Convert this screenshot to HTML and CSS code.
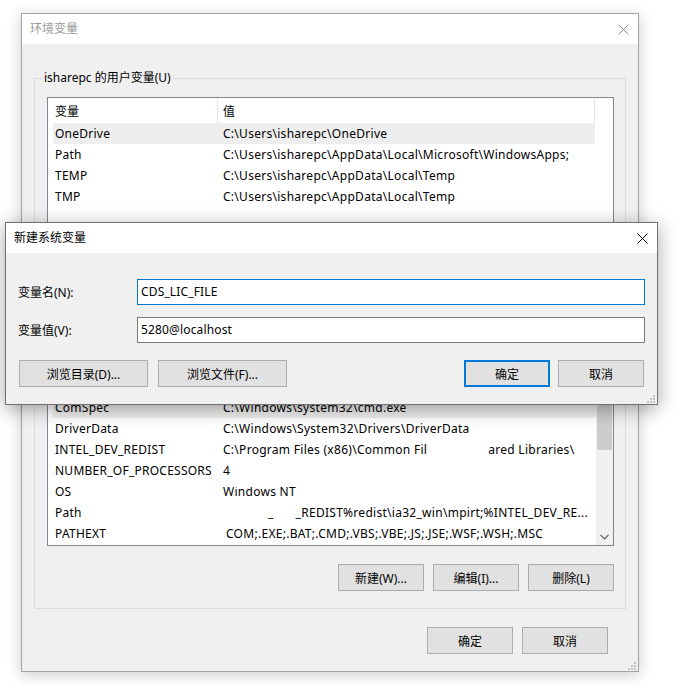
FILE: index.html
```html
<!DOCTYPE html>
<html lang="zh-CN">
<head>
<meta charset="utf-8">
<title>环境变量</title>
<link rel="stylesheet" href="styles.css">
</head>
<body>
<div class="desk">
  <div class="win main">
    <div class="titlebar">
      <span class="title dim">环境变量</span>
      <svg class="close dimx" width="11" height="11" viewBox="0 0 11 11"><path d="M0.5 0.5 L10.5 10.5 M10.5 0.5 L0.5 10.5" /></svg>
    </div>
    <div class="winbody">
      <div class="group">
        <span class="group-label">isharepc 的用户变量(U)</span>
        <div class="list user-list">
          <div class="lhead"><div class="hc hc1">变量</div><div class="hc hc2">值</div></div>
          <div class="row sel"><span class="c1">OneDrive</span><span class="c2">C:\Users\isharepc\OneDrive</span></div>
          <div class="row"><span class="c1">Path</span><span class="c2">C:\Users\isharepc\AppData\Local\Microsoft\WindowsApps;</span></div>
          <div class="row"><span class="c1">TEMP</span><span class="c2">C:\Users\isharepc\AppData\Local\Temp</span></div>
          <div class="row"><span class="c1">TMP</span><span class="c2">C:\Users\isharepc\AppData\Local\Temp</span></div>
        </div>
        <div class="list sys-list">
          <div class="rows">
            <div class="row sel"><span class="c1">ComSpec</span><span class="c2">C:\Windows\system32\cmd.exe</span></div>
            <div class="row"><span class="c1">DriverData</span><span class="c2">C:\Windows\System32\Drivers\DriverData</span></div>
            <div class="row"><span class="c1">INTEL_DEV_REDIST</span><span class="c2">C:\Program Files (x86)\Common Fil<span class="gap-a">ared Libraries\</span></span></div>
            <div class="row"><span class="c1">NUMBER_OF_PROCESSORS</span><span class="c2">4</span></div>
            <div class="row"><span class="c1">OS</span><span class="c2"><span class="clipped">Windows NT</span></span></div>
            <div class="row"><span class="c1">Path</span><span class="c2"><span class="gap-b">_</span><span class="gap-c">_REDIST%redist\ia32_win\mpirt;%INTEL_DEV_RE...</span></span></div>
            <div class="row"><span class="c1">PATHEXT</span><span class="c2 ext">COM;.EXE;.BAT;.CMD;.VBS;.VBE;.JS;.JSE;.WSF;.WSH;.MSC</span></div>
          </div>
          <div class="vscroll">
            <div class="thumb"></div>
            <div class="arrow">
              <svg width="9" height="6" viewBox="0 0 9 6"><path d="M0.5 0.8 L4.5 4.8 L8.5 0.8" /></svg>
            </div>
          </div>
        </div>
        <div class="btnrow">
          <button class="btn">新建(W)...</button>
          <button class="btn">编辑(I)...</button>
          <button class="btn">删除(L)</button>
        </div>
      </div>
      <div class="footer">
        <button class="btn">确定</button>
        <button class="btn">取消</button>
      </div>
    </div>
    <svg class="grip" width="8" height="8" viewBox="0 0 8 8"><rect x="6" y="0" width="2" height="2"/><rect x="3" y="3" width="2" height="2"/><rect x="6" y="3" width="2" height="2"/><rect x="0" y="6" width="2" height="2"/><rect x="3" y="6" width="2" height="2"/><rect x="6" y="6" width="2" height="2"/></svg>
  </div>

  <div class="win dialog">
    <div class="titlebar">
      <span class="title">新建系统变量</span>
      <svg class="close" width="11" height="11" viewBox="0 0 11 11"><path d="M0.5 0.5 L10.5 10.5 M10.5 0.5 L0.5 10.5" /></svg>
    </div>
    <div class="dlgbody">
      <div class="field">
        <label class="flabel">变量名(N):</label>
        <div class="input focus">CDS_LIC_FILE</div>
      </div>
      <div class="field">
        <label class="flabel">变量值(V):</label>
        <div class="input">5280@localhost</div>
      </div>
      <div class="dlgbtns">
        <button class="btn wide">浏览目录(D)...</button>
        <button class="btn wide">浏览文件(F)...</button>
        <span class="spacer"></span>
        <button class="btn default">确定</button>
        <button class="btn">取消</button>
      </div>
    </div>
    <svg class="grip" width="8" height="8" viewBox="0 0 8 8"><rect x="6" y="0" width="2" height="2"/><rect x="3" y="3" width="2" height="2"/><rect x="6" y="3" width="2" height="2"/><rect x="0" y="6" width="2" height="2"/><rect x="3" y="6" width="2" height="2"/><rect x="6" y="6" width="2" height="2"/></svg>
  </div>
</div>
</body>
</html>
```

FILE: styles.css
```css
* { box-sizing: border-box; }

html, body {
  margin: 0;
  padding: 0;
  background: #ffffff;
}

body {
  width: 676px;
  height: 686px;
  overflow: hidden;
  font-family: "Noto Sans", "Noto Sans CJK SC", sans-serif;
  font-size: 12px;
  color: #000;
}

.desk {
  position: relative;
  width: 676px;
  height: 686px;
  padding: 13px 0 0 21px;
}

.win {
  background: #f0f0f0;
  display: flex;
  flex-direction: column;
  position: relative;
}

.main {
  width: 618px;
  height: 659px;
  border: 1px solid #a3a3a3;
  box-shadow: 0 3px 14px rgba(0, 0, 0, 0.2);
}

.titlebar {
  height: 30px;
  flex: none;
  background: #fff;
  display: flex;
  align-items: center;
  justify-content: space-between;
  padding: 0 9px 0 8px;
}

.title { line-height: 1; }
.dim { color: #9a9a9a; }

.close path {
  stroke: #000;
  stroke-width: 1;
  fill: none;
}
.dimx path { stroke: #8c8c8c; }

.winbody {
  flex: 1;
  display: flex;
  flex-direction: column;
  padding: 34px 12px 0 12px;
}

.group {
  position: relative;
  height: 531px;
  border: 1px solid #dcdcdc;
  display: flex;
  flex-direction: column;
  padding: 18px 11px 17px 12px;
}

.group-label {
  position: absolute;
  left: 7px;
  top: -9px;
  padding: 0 2px;
  background: #f0f0f0;
  line-height: 16px;
}

.list {
  width: 567px;
  background: #fff;
  border: 1px solid #828790;
  flex: none;
}

.user-list {
  height: 150px;
}

.lhead {
  height: 25px;
  display: flex;
}

.hc {
  display: flex;
  align-items: center;
  border-right: 1px solid #e5e5e5;
}
.hc1 { width: 170px; padding-left: 7px; }
.hc2 { width: 377px; padding-left: 5px; }

.row {
  height: 21px;
  width: 542px;
  margin-left: 5px;
  display: flex;
  align-items: center;
  white-space: nowrap;
  flex: none;
  letter-spacing: 0.25px;
}

.row.sel { background: #eeeeee; }

.c1 {
  width: 170px;
  flex: none;
  padding-left: 2px;
  overflow: hidden;
}

.c2 {
  flex: 1;
  overflow: hidden;
  white-space: nowrap;
  letter-spacing: 0.28px;
}

.sys-list {
  margin-top: 20px;
  flex: 1;
  display: flex;
}

.rows {
  flex: 1;
  display: flex;
  flex-direction: column;
  justify-content: flex-end;
  overflow: hidden;
  padding-bottom: 1px;
}

.sys-list .row { width: 543px; }

.gap-a { margin-left: 61px; }
.gap-b { margin-left: 45px; }
.gap-c { margin-left: 22px; }
.ext { padding-left: 3px; }
.clipped {
  display: inline-block;
  clip-path: inset(4px 0 0 0);
}

.vscroll {
  width: 17px;
  flex: none;
  background: #f0f0f0;
  display: flex;
  flex-direction: column;
  padding-top: 17px;
}

.thumb {
  height: 165px;
  margin: 0 1px;
  background: #cdcdcd;
}

.arrow {
  margin-top: auto;
  height: 17px;
  display: flex;
  align-items: center;
  justify-content: center;
}
.arrow path {
  fill: none;
  stroke: #606060;
  stroke-width: 1.2;
}

.btnrow {
  margin-top: 18px;
  display: flex;
  justify-content: flex-end;
  gap: 9px;
}

.btn {
  width: 86px;
  height: 27px;
  background: #e1e1e1;
  border: 1px solid #adadad;
  font-family: inherit;
  font-size: 12px;
  color: #000;
  padding: 0;
  margin: 0;
  display: flex;
  align-items: center;
  justify-content: center;
}

.btn.wide { width: 129px; }
.btn.default { border: 2px solid #0078d7; }

.footer {
  margin-top: 18px;
  display: flex;
  justify-content: flex-end;
  gap: 9px;
  padding-right: 18px;
}

.grip {
  position: absolute;
  right: 2px;
  bottom: 1px;
}
.grip rect { fill: #c2c2c2; }

.dialog {
  position: absolute;
  left: 5px;
  top: 222px;
  width: 653px;
  height: 183px;
  border: 1px solid #707070;
  box-shadow: 0 4px 18px rgba(0, 0, 0, 0.35);
}

.dialog .titlebar { padding-left: 8px; padding-right: 9px; }

.dlgbody {
  flex: 1;
  display: flex;
  flex-direction: column;
  padding: 26px 12px 0 12px;
  gap: 12px;
}

.field {
  display: flex;
  align-items: center;
  height: 26px;
}

.flabel {
  width: 119px;
  padding-bottom: 1px;
}

.input {
  flex: 1;
  height: 26px;
  background: #fff;
  border: 1px solid #7a7a7a;
  display: flex;
  align-items: center;
  padding-left: 3px;
  padding-bottom: 1px;
  letter-spacing: 0.15px;
}
.input.focus { border-color: #0078d7; }

.dlgbtns {
  margin-top: 5px;
  display: flex;
  padding: 0 1px;
  gap: 10px;
}
.dlgbtns .spacer { flex: 1; }
.dlgbtns .default { margin-right: -2px; }
```
